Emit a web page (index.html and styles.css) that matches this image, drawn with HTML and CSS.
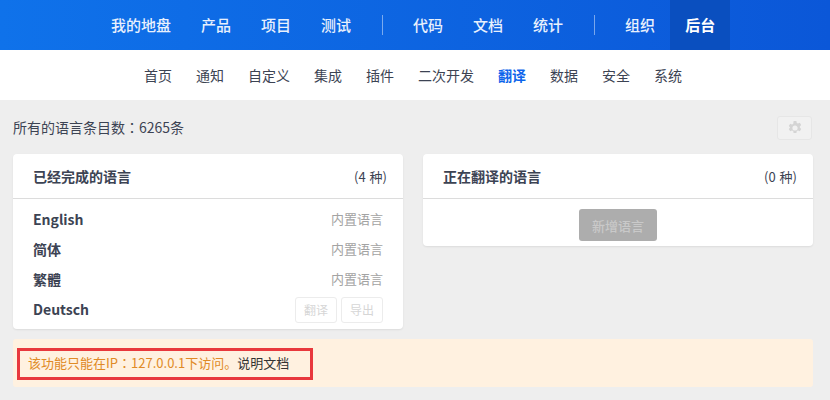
FILE: index.html
```html
<!DOCTYPE html>
<html lang="zh-CN">
<head>
<meta charset="utf-8">
<title>翻译</title>
<link rel="stylesheet" href="styles.css">
</head>
<body>
<header class="topnav">
  <a class="topnav-item">我的地盘</a>
  <a class="topnav-item">产品</a>
  <a class="topnav-item">项目</a>
  <a class="topnav-item">测试</a>
  <span class="topnav-divider"></span>
  <a class="topnav-item">代码</a>
  <a class="topnav-item">文档</a>
  <a class="topnav-item">统计</a>
  <span class="topnav-divider"></span>
  <a class="topnav-item">组织</a>
  <a class="topnav-item is-active">后台</a>
</header>
<nav class="subnav">
  <a>首页</a><a>通知</a><a>自定义</a><a>集成</a><a>插件</a><a>二次开发</a><a class="is-active">翻译</a><a>数据</a><a>安全</a><a>系统</a>
</nav>
<main class="content">
  <div class="toolbar">
    <span>所有的语言条目数<span class="colon" lang="ja">：</span>6265条</span>
    <button class="gear-btn" type="button" aria-label="设置">
      <svg class="gear" viewBox="0 0 16 16" width="16" height="16"><path fill-rule="evenodd" d="M6.6 1h2.800l.4 1.900 1.200.6 1.800-.8 1.400 2.400-1.400 1.300v1.200l1.400 1.300-1.400 2.400-1.800-.8-1.200.6-.4 1.900H6.600l-.4-1.900-1.200-.6-1.800.8-1.400-2.400 1.400-1.300V7.400L1.800 6.100l1.400-2.400 1.800.8 1.200-.6zM8 5.400a2.600 2.600 0 1 0 0 5.200 2.600 2.600 0 0 0 0-5.200z"/></svg>
    </button>
  </div>
  <div class="cards">
    <section class="card">
      <div class="card-head"><strong>已经完成的语言</strong><span class="count">(4 种)</span></div>
      <div class="card-body rows">
        <div class="row"><strong>English</strong><span class="muted">内置语言</span></div>
        <div class="row"><strong>简体</strong><span class="muted">内置语言</span></div>
        <div class="row"><strong>繁體</strong><span class="muted">内置语言</span></div>
        <div class="row"><strong>Deutsch</strong><span class="row-actions"><button class="ghost" type="button">翻译</button><button class="ghost" type="button">导出</button></span></div>
      </div>
    </section>
    <section class="card">
      <div class="card-head"><strong>正在翻译的语言</strong><span class="count">(0 种)</span></div>
      <div class="card-body center"><button class="add-btn" type="button">新增语言</button></div>
    </section>
  </div>
  <div class="alert">
    <div class="alert-mark"><span class="warn">该功能只能在IP<span class="colon" lang="ja">：</span>127.0.0.1下访问。</span><a class="doc">说明文档</a></div>
  </div>
</main>
</body>
</html>
```
FILE: styles.css
```css
* { box-sizing: border-box; }
html, body { margin: 0; height: 100%; overflow: hidden; }
body {
  background: #eeeeee;
  color: #3c4353;
  font-family: "Noto Sans CJK SC", "Noto Sans", sans-serif;
  font-size: 13px;
}
.colon { font-family: "Noto Sans CJK JP", sans-serif; }
.topnav {
  height: 50px;
  display: flex;
  align-items: stretch;
  padding-left: 96px;
  background: linear-gradient(90deg, #0f72ea, #0b57d8);
}
.topnav-item {
  padding: 0 15px;
  line-height: 49px;
  font-size: 15px;
  font-weight: 500;
  color: #e8f0fd;
}
.topnav-item.is-active {
  background: #0a4fbf;
  color: #fff;
  font-weight: 700;
}
.topnav-divider {
  width: 1px;
  height: 20px;
  align-self: center;
  margin: 0 15px 0 16px;
  background: rgba(255,255,255,.45);
}
.subnav {
  height: 50px;
  display: flex;
  align-items: center;
  gap: 24px;
  padding-left: 144px;
  background: #fff;
  font-size: 14px;
  color: #3c4353;
}
.subnav .is-active { color: #0c64eb; font-weight: 700; }
.content { padding: 16px 17px 0 13px; }
.toolbar {
  height: 24px;
  display: flex;
  justify-content: space-between;
  align-items: center;
  font-size: 14px;
  line-height: 22px;
}
.toolbar > span { margin-top: -2px; }
.gear-btn {
  width: 35px;
  height: 24px;
  margin-right: 1px;
  padding: 0;
  display: flex;
  align-items: center;
  justify-content: center;
  background: #f1f1f1;
  border: 1px solid #e6e6e6;
  border-radius: 3px;
}
.gear { fill: #d4d4d4; }
.cards {
  display: grid;
  grid-template-columns: 390px 390px;
  gap: 20px;
  align-items: start;
  margin-top: 14px;
}
.card {
  background: #fff;
  border-radius: 4px;
  box-shadow: 0 1px 2px rgba(0,0,0,.08);
}
.card-head {
  height: 45px;
  display: flex;
  justify-content: space-between;
  align-items: center;
  padding: 0 16px 0 20px;
  border-bottom: 1px solid #dcdcdc;
  font-size: 13px;
}
.card-head strong { font-size: 14px; font-weight: 700; }
.count { word-spacing: 1px; }
.rows { padding: 5px 20px 5px; }
.row {
  height: 30px;
  display: flex;
  justify-content: space-between;
  align-items: center;
}
.row strong { font-size: 14px; font-weight: 700; }
.muted { color: #a3a3a3; font-size: 13px; margin-top: -2px; }
.row-actions { display: flex; gap: 4px; margin-top: 1px; }
.ghost {
  width: 42px;
  height: 26px;
  padding: 0;
  background: #fff;
  border: 1px solid #ececec;
  border-radius: 3px;
  color: #d6d6d6;
  font: 12px "Noto Sans CJK SC", sans-serif;
}
.center { display: flex; justify-content: center; padding: 10px 0 5px; }
.add-btn {
  width: 78px;
  height: 32px;
  padding: 0;
  background: #adadad;
  border: 0;
  border-radius: 3px;
  color: #c9c9c9;
  font: 500 13px "Noto Sans CJK SC", sans-serif;
}
.alert {
  margin-top: 10px;
  height: 48px;
  padding: 9px 0 0 4px;
  background: #fff1e0;
  border-radius: 3px;
}
.alert-mark {
  width: 296px;
  height: 32px;
  display: flex;
  align-items: center;
  padding: 0 0 3px 8px;
  border: 3px solid #e8383d;
  font-size: 13px;
}
.warn { color: #e08a25; }
.doc { color: #333; }
```
